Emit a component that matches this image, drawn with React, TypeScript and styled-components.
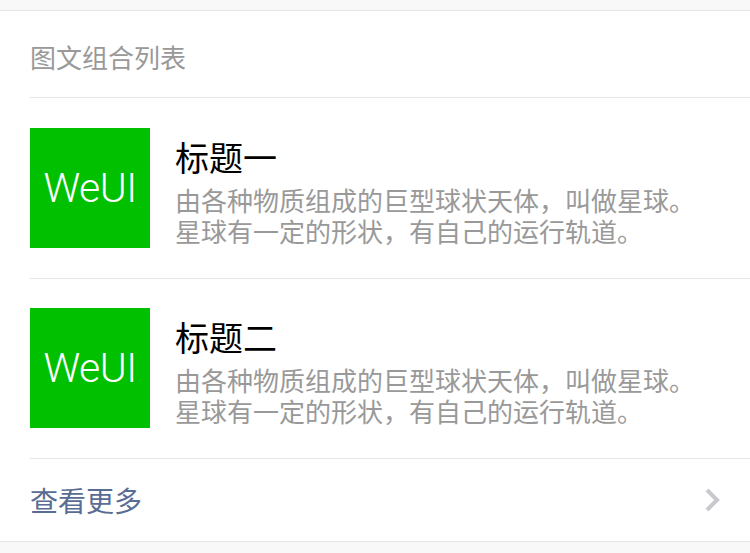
import React from "react";
import styled, { createGlobalStyle } from "styled-components";

const GlobalStyle = createGlobalStyle`
  html, body {
    margin: 0;
    padding: 0;
    background: #f8f8f8;
  }
  body {
    font-family: "Noto Sans CJK SC", "Noto Sans", sans-serif;
  }
`;

const Page = styled.div`
  padding-top: 10px;
  height: 553px;
  box-sizing: border-box;
  background: #f8f8f8;
`;

const Panel = styled.div`
  background: #fff;
  border-top: 1px solid #e5e5e5;
  border-bottom: 1px solid #e5e5e5;
`;

const PanelHeader = styled.div`
  padding: 27px 30px 21px;
  font-size: 26px;
  line-height: 38px;
  color: #999;
`;

const Row = styled.div`
  margin-left: 30px;
  border-top: 1px solid #e5e5e5;
`;

const Item = styled.div<{ $first?: boolean }>`
  display: flex;
  align-items: center;
  padding: ${(p) => (p.$first ? "30px" : "29px")} 30px 30px 0;
`;

const Thumb = styled.div`
  width: 120px;
  height: 120px;
  flex: none;
  background: #00c000;
  color: #fff;
  display: flex;
  align-items: center;
  justify-content: center;
  font-family: Roboto, "Liberation Sans", sans-serif;
  font-weight: 300;
  font-size: 41px;
  letter-spacing: -0.5px;
  margin-right: 27px;
`;

const Body = styled.div`
  flex: 1;
  min-width: 0;
`;

const Title = styled.h4`
  margin: 0 0 0 -2px;
  font-weight: 400;
  font-size: 34px;
  line-height: 54px;
  color: #000;
`;

const Desc = styled.p`
  margin: 0 0 0 -2px;
  font-size: 26px;
  line-height: 31px;
  color: #999;
`;

const Footer = styled.div`
  display: flex;
  align-items: center;
  justify-content: space-between;
  height: 82px;
  padding-right: 28px;
  font-size: 28px;
  color: #586c94;
`;

const Arrow = styled.svg`
  width: 18px;
  height: 24px;
  flex: none;
`;

const items = [{ title: "标题一" }, { title: "标题二" }];

export default function App() {
  return (
    <Page>
      <GlobalStyle />
      <Panel>
        <PanelHeader>图文组合列表</PanelHeader>
        {items.map((it, i) => (
          <Row key={it.title}>
            <Item $first={i === 0}>
              <Thumb>WeUI</Thumb>
              <Body>
                <Title>{it.title}</Title>
                <Desc>
                  由各种物质组成的巨型球状天体，叫做星球。星球有一定的形状，有自己的运行轨道。
                </Desc>
              </Body>
            </Item>
          </Row>
        ))}
        <Row>
          <Footer>
            <span>查看更多</span>
            <Arrow viewBox="0 0 18 24">
              <polyline
                points="3,2 13,12 3,22"
                fill="none"
                stroke="#c8c8cd"
                strokeWidth="4"
              />
            </Arrow>
          </Footer>
        </Row>
      </Panel>
    </Page>
  );
}
